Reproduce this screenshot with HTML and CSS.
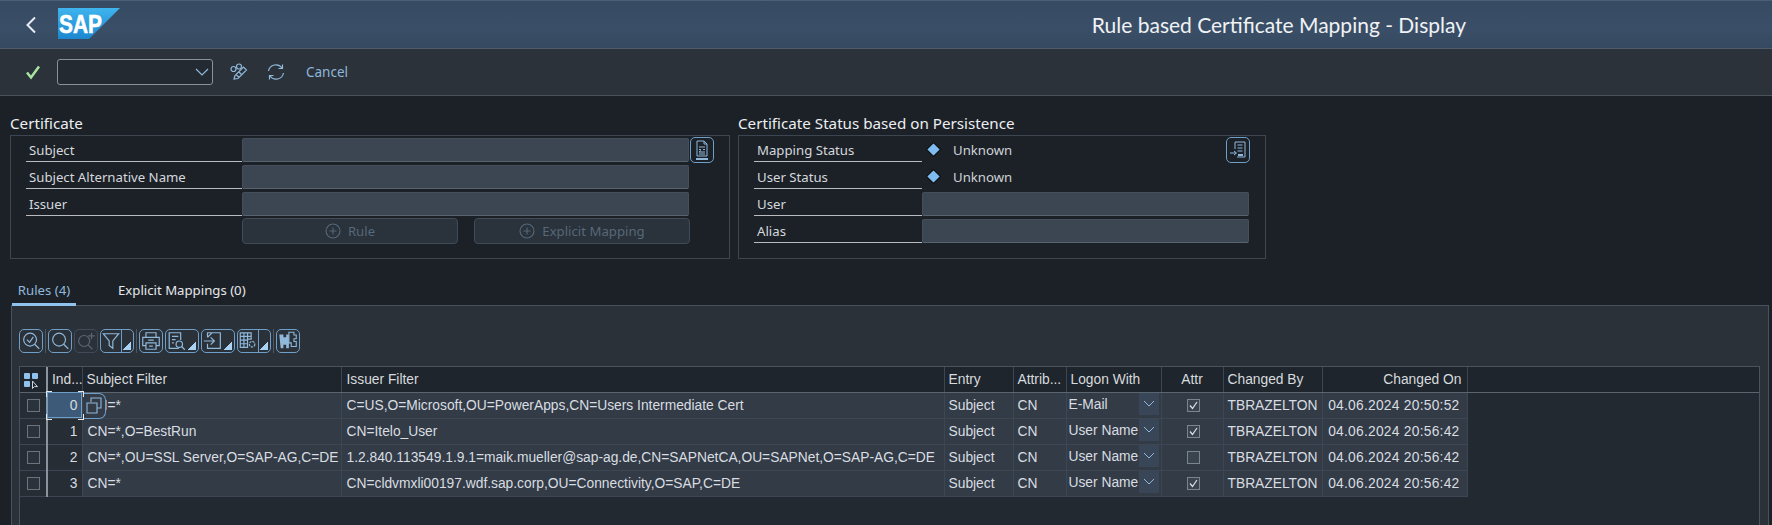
FILE: index.html
```html
<!DOCTYPE html>
<html lang="en">
<head>
<meta charset="utf-8">
<title>Rule based Certificate Mapping - Display</title>
<link rel="stylesheet" href="styles.css">
</head>
<body>
<header class="shell">
  <svg class="back" width="12" height="18" viewBox="0 0 12 18"><path d="M10 1.500 2.500 9l7.500 7.500"/></svg>
  <svg class="logo" width="62" height="31" viewBox="0 0 62 31">
    <defs><linearGradient id="sapg" x1="0" y1="0" x2="0" y2="1"><stop offset="0" stop-color="#3fb4ee"/><stop offset="1" stop-color="#1b87cf"/></linearGradient></defs>
    <polygon points="0,0 62,0 31,31 0,31" fill="url(#sapg)"/>
    <text x="1" y="25" class="logo-text" textLength="43" lengthAdjust="spacingAndGlyphs">SAP</text>
  </svg>
  <h1 class="title">Rule based Certificate Mapping - Display</h1>
</header>

<nav class="tools">
  <svg class="check" width="16" height="16" viewBox="0 0 16 16"><path d="M2 8.500 6 13.500 14 2.500"/></svg>
  <div class="combo"><svg width="14" height="8" viewBox="0 0 14 8"><path d="M1 1 7 7 13 1"/></svg></div>
  <svg class="tool-icon glasses" width="18" height="18" viewBox="0 0 18 18"><circle cx="3.500" cy="6" r="2.500"/><circle cx="9" cy="3.500" r="2.500"/><path d="M5.500 5 7 4.500M4 16l1-3.500L13.500 4l3 3L8 15.500zM6 11.500l3 3M9 9l3 3"/></svg>
  <svg class="tool-icon refresh" width="18" height="18" viewBox="0 0 18 18"><path d="M1.500 8A7.500 7.500 0 0 1 15 5M16.500 10A7.500 7.500 0 0 1 3 13M15.500 1.500V5.500H11.500M2.500 16.500V12.500H6.500"/></svg>
  <span class="cancel">Cancel</span>
</nav>

<main class="main">
  <div class="groups">
    <section class="group group-cert">
      <h2 class="group-title">Certificate</h2>
      <div class="group-box form form-cert">
        <label class="lbl">Subject</label><div class="field"></div>
        <button class="icon-btn tall"><svg width="16" height="22" viewBox="0 0 16 22"><path d="M3 17V2h7l3 3v12zM10 2v3h3M5 8h6M5 10.500h2M9 10.500h2M11 13H5l2-1.500M5 15h6"/><path class="bar" d="M2 20h12"/></svg></button>
        <label class="lbl">Subject Alternative Name</label><div class="field"></div><span></span>
        <label class="lbl">Issuer</label><div class="field"></div><span></span>
        <span></span>
        <div class="actions">
          <button class="action"><svg width="16" height="16" viewBox="0 0 16 16"><circle cx="8" cy="8" r="7"/><path d="M8 4.500v7M4.500 8h7"/></svg>Rule</button>
          <button class="action"><svg width="16" height="16" viewBox="0 0 16 16"><circle cx="8" cy="8" r="7"/><path d="M8 4.500v7M4.500 8h7"/></svg>Explicit Mapping</button>
        </div>
      </div>
    </section>
    <section class="group group-status">
      <h2 class="group-title">Certificate Status based on Persistence</h2>
      <div class="group-box form form-status">
        <label class="lbl">Mapping Status</label>
        <div class="status"><i class="diamond"></i><span>Unknown</span>
          <button class="icon-btn tall push"><svg width="18" height="18" viewBox="0 0 18 18"><path d="M6 8V1h10v15H8M8.500 4h5M8.500 7h5M8.500 10h5M1 12h6M5 10l2.500 2L5 14"/><path class="bar" d="M9 14h5"/></svg></button>
        </div>
        <label class="lbl">User Status</label>
        <div class="status"><i class="diamond"></i><span>Unknown</span></div>
        <label class="lbl">User</label><div class="field"></div>
        <label class="lbl">Alias</label><div class="field"></div>
      </div>
    </section>
  </div>

  <div class="tabs">
    <span class="tab active">Rules (4)</span>
    <span class="tab">Explicit Mappings (0)</span>
  </div>

  <section class="panel">
    <div class="grid-tools">
      <button class="g-btn"><svg viewBox="0 0 24 24"><circle cx="11" cy="10.500" r="7"/><path d="M16 15.500l5 5M7.500 10.500l3 3 4-6"/></svg></button>
      <span class="sep"></span>
      <button class="g-btn"><svg viewBox="0 0 24 24"><circle cx="11" cy="10.500" r="7"/><path d="M16 15.500l5 5"/></svg></button>
      <button class="g-btn off"><svg viewBox="0 0 24 24"><circle cx="10" cy="12" r="6"/><path d="M14.500 16.500l4.500 4.500M18 3v7M14.500 6.500h7"/></svg></button>
      <button class="g-btn split"><svg class="narrow" viewBox="0 0 22 24"><path d="M2.500 4h17l-6.500 8v8l-4-3v-5z"/></svg><i class="tri-cell"><b class="tri"></b></i></button>
      <span class="sep"></span>
      <button class="g-btn"><svg viewBox="0 0 24 24"><path d="M6.500 8V3h11v5M6.500 17H3V8h18v9h-3.500M6.500 14h11v7h-11zM10 17.500h4M9 11h6"/></svg></button>
      <button class="g-btn wide"><svg viewBox="0 0 24 24"><path d="M14 20H3.500V3H16v8M6.500 7h7M6.500 10.500h4M6.500 14h2"/><circle cx="14.500" cy="15.500" r="3.500"/><path d="M17 18l3.500 3.500"/></svg><b class="tri"></b></button>
      <button class="g-btn wide"><svg viewBox="0 0 24 24"><path d="M6 8V3h14v17H6v-5M11 3l-5 5M2 12h11M9.500 8l4 4-4 4"/></svg><b class="tri"></b></button>
      <button class="g-btn split"><svg class="narrow" viewBox="0 0 22 24"><path d="M2.500 3h12v7h-4v9h-8zM2.500 7h12M2.500 11h8M2.500 15h8M6.500 3v16M10.500 3v7"/><circle cx="15.500" cy="15.500" r="3" stroke-dasharray="2.500 1"/></svg><i class="tri-cell"><b class="tri"></b></i></button>
      <span class="sep"></span>
      <button class="g-btn"><svg viewBox="0 0 24 24"><path class="fill" d="M2.500 5h4.500v3h3V5h3v4h1.500a2.500 2.500 0 0 1 0 5H13v6h-3v-4H7v4H4z"/><path class="fill-light" d="M13 2.500h5.500v3H21v4h-2.500v3H21v5.500h-5.500V14H13z"/></svg></button>
    </div>

    <div class="grid-box">
      <table class="grid">
        <colgroup><col class="c-sel"><col class="c-idx"><col class="c-sub"><col class="c-iss"><col class="c-ent"><col class="c-atb"><col class="c-log"><col class="c-atr"><col class="c-by"><col class="c-on"><col></colgroup>
        <thead>
          <tr>
            <th class="sel-h"><svg width="18" height="18" viewBox="0 0 18 18"><rect class="tile" x="1" y="1" width="6" height="6" rx="1"/><rect class="tile" x="9" y="1" width="6" height="6" rx="1"/><rect class="tile" x="1" y="9" width="6" height="6" rx="1"/><path class="cursor" d="M9.500 9v7.500l2-2 3 .2z"/></svg></th>
            <th>Ind...</th><th>Subject Filter</th><th class="iss-h">Issuer Filter</th><th>Entry</th><th>Attrib...</th><th>Logon With</th><th class="center">Attr</th><th>Changed By</th><th class="right">Changed On</th><th></th>
          </tr>
        </thead>
        <tbody>
          <tr>
            <td class="sel"><i class="box"></i></td><td class="idx focus">0<i class="cn a"></i><i class="cn b"></i><i class="cn c"></i><i class="cn d"></i></td>
            <td class="sub filter"><span class="copy"><svg width="18" height="18" viewBox="0 0 18 18"><path d="M6 5V1h10v10h-4M2 6h10v10H2z"/></svg></span>CN=*</td>
            <td class="filter">C=US,O=Microsoft,OU=PowerApps,CN=Users Intermediate Cert</td><td>Subject</td><td>CN</td>
            <td class="logon"><span>E-Mail</span><b class="dd"><svg width="12" height="7" viewBox="0 0 12 7"><path d="M1 1l5 5 5-5"/></svg></b></td>
            <td class="center"><svg class="cb" width="13" height="13" viewBox="0 0 13 13"><rect x=".5" y=".5" width="12" height="12"/><path d="M3 6.500l2.500 3L10 3"/></svg></td>
            <td>TBRAZELTON</td><td class="right date">04.06.2024 20:50:52</td><td class="blank"></td>
          </tr>
          <tr>
            <td class="sel"><i class="box"></i></td><td class="idx">1</td><td class="filter">CN=*,O=BestRun</td>
            <td class="filter">CN=Itelo_User</td><td>Subject</td><td>CN</td>
            <td class="logon"><span>User Name</span><b class="dd"><svg width="12" height="7" viewBox="0 0 12 7"><path d="M1 1l5 5 5-5"/></svg></b></td>
            <td class="center"><svg class="cb" width="13" height="13" viewBox="0 0 13 13"><rect x=".5" y=".5" width="12" height="12"/><path d="M3 6.500l2.500 3L10 3"/></svg></td>
            <td>TBRAZELTON</td><td class="right date">04.06.2024 20:56:42</td><td class="blank"></td>
          </tr>
          <tr>
            <td class="sel"><i class="box"></i></td><td class="idx">2</td><td class="filter">CN=*,OU=SSL Server,O=SAP-AG,C=DE</td>
            <td class="filter">1.2.840.113549.1.9.1=maik.mueller@sap-ag.de,CN=SAPNetCA,OU=SAPNet,O=SAP-AG,C=DE</td><td>Subject</td><td>CN</td>
            <td class="logon"><span>User Name</span><b class="dd"><svg width="12" height="7" viewBox="0 0 12 7"><path d="M1 1l5 5 5-5"/></svg></b></td>
            <td class="center"><svg class="cb" width="13" height="13" viewBox="0 0 13 13"><rect x=".5" y=".5" width="12" height="12"/></svg></td>
            <td>TBRAZELTON</td><td class="right date">04.06.2024 20:56:42</td><td class="blank"></td>
          </tr>
          <tr>
            <td class="sel"><i class="box"></i></td><td class="idx">3</td><td class="filter">CN=*</td>
            <td class="filter">CN=cldvmxli00197.wdf.sap.corp,OU=Connectivity,O=SAP,C=DE</td><td>Subject</td><td>CN</td>
            <td class="logon"><span>User Name</span><b class="dd"><svg width="12" height="7" viewBox="0 0 12 7"><path d="M1 1l5 5 5-5"/></svg></b></td>
            <td class="center"><svg class="cb" width="13" height="13" viewBox="0 0 13 13"><rect x=".5" y=".5" width="12" height="12"/><path d="M3 6.500l2.500 3L10 3"/></svg></td>
            <td>TBRAZELTON</td><td class="right date">04.06.2024 20:56:42</td><td class="blank"></td>
          </tr>
        </tbody>
      </table>
    </div>
  </section>
</main>
</body>
</html>
```

FILE: styles.css
```css
* { box-sizing: border-box; }
html, body { margin: 0; height: 525px; overflow: hidden; }
body { background: #1c2128; color: #d9dcdf; font-family: "Noto Sans", "Liberation Sans", sans-serif; font-size: 13.200px; }
svg { fill: none; display: block; flex: none; }
button { font: inherit; padding: 0; background: none; }

/* Shell header */
.shell { height: 49px; display: flex; align-items: center; background: linear-gradient(#364b62, #3a4f67 60%, #354a60); border-top: 1px solid #4a6079; border-bottom: 1px solid #505c69; padding-right: 306px; }
.back { margin: 1px 0 0 25px; }
.back path { stroke: #e6edf3; stroke-width: 2; }
.logo { margin: -2px 0 0 21px; }
.logo-text { fill: #fff; stroke: #fff; stroke-width: .6px; font: bold 26.500px "Liberation Sans", sans-serif; }
.title { margin: 0 0 0 auto; font: 400 21px Lato, "Open Sans", sans-serif; color: #f0f2f4; }

/* Toolbar */
.tools { height: 47px; display: flex; align-items: center; background: #2b323a; border-bottom: 1px solid #4a535d; }
.check { margin-left: 25px; }
.check path { stroke: #a8e6a0; stroke-width: 2.500; }
.combo { width: 156px; height: 26px; margin-left: 16px; border: 1px solid #8a939c; border-radius: 3px; background: #232a31; display: flex; align-items: center; justify-content: flex-end; padding-right: 3px; }
.combo path { stroke: #8fb8db; stroke-width: 1.200; }
.tool-icon path, .tool-icon circle { stroke: #8fb8db; stroke-width: 1.200; }
.glasses { margin-left: 17px; }
.refresh { margin-left: 19px; }
.cancel { margin-left: 21px; color: #8fb8db; font-size: 13.500px; }

/* Groups */
.main { padding: 19px 0 0 10px; }
.groups { display: flex; gap: 8px; }
.group-cert { width: 720px; }
.group-status { width: 528px; }
.group-title { margin: 0; height: 20px; font-size: 15.200px; line-height: 16px; font-weight: 400; color: #eceef0; }
.group-box { height: 124px; border: 1px solid #3d4650; padding: 2px 0 0 15px; }
.form { display: grid; grid-auto-rows: 27px; align-content: start; }
.form-cert { grid-template-columns: 216px 448px 25px; }
.form-status { grid-template-columns: 168px 327px; }
.lbl { height: 24px; padding-left: 3px; line-height: 24px; border-bottom: 1px solid #b8bcc0; color: #d5d8dc; }
.field { height: 24px; background: #3b4652; border: 1px solid #454f5b; border-bottom-color: #59636e; border-radius: 2px; margin-right: 1px; }
.form-status .field { margin-right: 0; }
.icon-btn { width: 24px; height: 26px; margin-top: -1px; display: flex; align-items: center; justify-content: center; border: 1px solid #6f9fc9; border-radius: 5px; }
.icon-btn path { stroke: #8fb8db; stroke-width: 1; }
.icon-btn path.bar { stroke-width: 2; }
.actions { display: flex; gap: 16px; margin-top: -1px; }
.action { width: 216px; height: 26px; display: flex; align-items: center; justify-content: center; gap: 7px; color: #566879; background: #2a323b; border: 1px solid #414c58; border-radius: 4px; font-size: 13.200px; }
.action circle, .action path { stroke: #566879; stroke-width: 1.100; }
.status { display: flex; align-items: flex-start; height: 24px; line-height: 24px; color: #cfd3d7; }
.diamond { width: 9px; height: 9px; margin: 7px 0 0 7px; background: #7ebcf2; outline: 1px solid #111; transform: rotate(45deg); }
.status span { margin-left: 15px; }
.push { margin-left: auto; margin-right: -1px; }

/* Tabs */
.tabs { display: flex; margin: 15px 0 -1px 2px; height: 32px; position: relative; z-index: 1; }
.tab { height: 32px; line-height: 32px; color: #e6e8ea; }
.tab.active { width: 64px; text-align: center; color: #8fb8db; border-bottom: 3px solid #8fc3ee; }
.tab + .tab { margin-left: 42px; }

/* Panel */
.panel { margin: 0 3px 0 1px; height: 220px; padding: 23px 8px 0 7px; background: #2a3139; border: 1px solid #49535d; border-bottom: 0; }
.grid-tools { display: flex; height: 24px; gap: 2px; margin-bottom: 13px; }
.g-btn { width: 24px; height: 24px; border: 1px solid #6f9fc9; border-radius: 5px; display: flex; position: relative; flex: none; }
.g-btn svg { width: 22px; height: 22px; }
.g-btn svg.narrow { width: 20px; }
.g-btn path, .g-btn circle { stroke: #8fb8db; stroke-width: 1.300; }
.g-btn.off { border-color: #414c58; }
.g-btn.off path, .g-btn.off circle { stroke: #5a6672; }
.g-btn.wide { width: 34px; }
.g-btn.split { width: 34px; }
.tri-cell { width: 12px; border-left: 1px solid #6f9fc9; flex: none; position: relative; }
.tri { position: absolute; right: 2px; bottom: 2px; width: 8px; height: 8px; background: linear-gradient(135deg, transparent 50%, #a9d3f5 50%); }
.g-btn path.fill { fill: #8fb8db; stroke: none; }
.g-btn path.fill-light { fill: #2a3139; stroke: #8fb8db; stroke-width: 1.200; }
.sep { width: 1px; height: 24px; background: #4d5761; }

/* Table */
.grid-box { height: 159px; background: #222930; border: solid #49535d; border-width: 1px 1px 0 1px; }
.grid { width: 100%; table-layout: fixed; border-collapse: collapse; font-family: "Liberation Sans", Arial, sans-serif; font-size: 13.800px; }
.c-sel { width: 27px; } .c-idx { width: 35px; } .c-sub { width: 259px; } .c-iss { width: 603px; } .c-ent { width: 69px; }
.c-atb { width: 53px; } .c-log { width: 95px; } .c-atr { width: 62px; } .c-by { width: 99px; } .c-on { width: 145px; }
th { height: 25px; padding: 0 4px; font-weight: 400; text-align: left; color: #d7dade; background: #1e252c; border-right: 1px solid #3d4753; border-bottom: 1px solid #5a6570; white-space: nowrap; overflow: hidden; }
th:last-child { border-right: 0; }
th.iss-h { padding-left: 5px; }
td { height: 26px; padding: 0 2px 0 4px; color: #d9dde1; background: #323b46; border: 1px solid #3d4753; border-width: 0 1px 1px 0; white-space: nowrap; overflow: hidden; }
td.filter { padding-left: 5px; }
.center { text-align: center; }
th.right { text-align: right; padding-right: 5px; }
td.date { text-align: right; padding-right: 7px; padding-left: 0; letter-spacing: .25px; }
td.blank { background: transparent; border: 0; }
.sel-h svg { margin: 3px 0 0 3px; }
.tile { fill: #8fc3ee; }
.cursor { stroke: #c9d3dc; }
td.sel { background: #262d35; padding: 0 0 0 7px; border-right: 2px solid #8b949d; }
th.sel-h { border-right: 2px solid #8b949d; padding: 0; }
.box { display: block; width: 13px; height: 13px; border: 1px solid #6b747d; background: #2a323b; }
td.idx { background: #262d35; text-align: right; padding-right: 4px; overflow: visible; position: relative; }
td.focus { background: #3d5a78; outline: 1px solid #6f9fc9; outline-offset: -1px; }
.cn { position: absolute; width: 6px; height: 6px; border: solid #e6e8ea; border-width: 0; z-index: 2; }
.cn.a { left: -2px; top: -2px; border-width: 1px 0 0 1px; }
.cn.b { right: -2px; top: -2px; border-width: 1px 1px 0 0; }
.cn.c { left: -2px; bottom: -2px; border-width: 0 0 1px 1px; }
.cn.d { right: -2px; bottom: -2px; border-width: 0 1px 1px 0; }
td.sub { position: relative; overflow: visible; }
.copy { position: absolute; left: 1px; top: 0; width: 22px; height: 26px; background: #323b46; border: 1px solid #6f9fc9; border-left: 0; border-radius: 0 7px 7px 0; display: flex; align-items: center; justify-content: center; }
.copy path { stroke: #8fb8db; stroke-width: 1.100; }
td.logon { padding: 0 0 0 2px; position: relative; }
.logon span { display: block; margin-top: -2px; }
.dd { position: absolute; right: 2px; top: 0; width: 20px; height: 22px; background: #394657; display: flex; align-items: center; justify-content: center; }
.dd path { stroke: #8fb8db; stroke-width: 1; }
.cb { margin: 0 auto; }
.cb rect { stroke: #7c858e; fill: #3a444f; }
.cb path { stroke: #dfe2e6; stroke-width: 1.200; }
```
